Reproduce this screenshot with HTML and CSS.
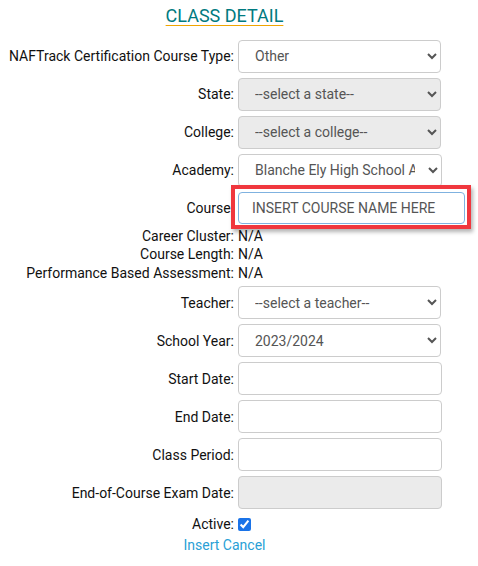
FILE: index.html
```html
<!DOCTYPE html>
<html>
<head>
<meta charset="utf-8">
<link rel="stylesheet" href="styles.css">
</head>
<body>
<div class="page">
  <h1 class="title"><span>CLASS DETAIL</span></h1>
  <div class="form">
    <div class="row">
      <label class="lbl">NAFTrack Certification Course Type:</label>
      <select class="ctl"><option>Other</option></select>
    </div>
    <div class="row">
      <label class="lbl">State:</label>
      <select class="ctl disabled"><option>--select a state--</option></select>
    </div>
    <div class="row">
      <label class="lbl">College:</label>
      <select class="ctl disabled"><option>--select a college--</option></select>
    </div>
    <div class="row">
      <label class="lbl">Academy:</label>
      <select class="ctl"><option>Blanche Ely High School Academy of Finance</option></select>
    </div>
    <div class="row row-course">
      <label class="lbl">Course:</label>
      <div class="course-wrap">
        <input class="ctl course" type="text" value="INSERT COURSE NAME HERE">
        <span class="annot"></span>
      </div>
    </div>
    <div class="info"><span class="lbl">Career Cluster:</span><span class="val">N/A</span></div>
    <div class="info"><span class="lbl">Course Length:</span><span class="val">N/A</span></div>
    <div class="info info-last"><span class="lbl">Performance Based Assessment:</span><span class="val">N/A</span></div>
    <div class="row">
      <label class="lbl">Teacher:</label>
      <select class="ctl"><option>--select a teacher--</option></select>
    </div>
    <div class="row">
      <label class="lbl">School Year:</label>
      <select class="ctl"><option>2023/2024</option></select>
    </div>
    <div class="row">
      <label class="lbl">Start Date:</label>
      <input class="ctl" type="text">
    </div>
    <div class="row">
      <label class="lbl">End Date:</label>
      <input class="ctl" type="text">
    </div>
    <div class="row">
      <label class="lbl">Class Period:</label>
      <input class="ctl" type="text">
    </div>
    <div class="row">
      <label class="lbl">End-of-Course Exam Date:</label>
      <input class="ctl disabled" type="text" readonly>
    </div>
    <div class="active-row">
      <label class="lbl">Active:</label>
      <input class="check" type="checkbox" checked>
    </div>
    <div class="actions"><a href="#">Insert</a> <a href="#">Cancel</a></div>
  </div>
</div>
</body>
</html>
```

FILE: styles.css
```css
html, body {
  margin: 0;
  padding: 0;
  background: #fff;
}
body {
  font-family: Roboto, "Noto Sans", sans-serif;
  font-size: 14px;
  color: #111;
}
.page {
  width: 433px;
  padding: 0 0 0 8px;
}
.title {
  margin: 0;
  padding-top: 5px;
  height: 39.5px;
  box-sizing: border-box;
  text-align: center;
  font-size: 18px;
  font-weight: 400;
  line-height: 21px;
}
.title span {
  color: #007a80;
  text-decoration: underline;
  text-decoration-color: #f0a500;
  text-underline-offset: 3px;
}
.form {
  display: flex;
  flex-direction: column;
}
.row {
  display: flex;
  align-items: center;
  height: 33px;
  margin-bottom: 5px;
}
.row-course {
  margin-bottom: 2px;
  position: relative;
}
.lbl {
  flex: none;
  text-align: right;
  padding-right: 4px;
  box-sizing: border-box;
  width: 230px;
  color: #111;
}
.ctl {
  width: 204px;
  height: 33px;
  box-sizing: border-box;
  border: 1px solid #ccc;
  border-radius: 4px;
  background: #fff;
  font-family: Roboto, "Noto Sans", sans-serif;
  font-size: 14px;
  color: #555;
  padding: 0 12px;
  margin: 0;
}
select.ctl {
  padding: 0 10px 0 12px;
}
.ctl.disabled {
  background: #ebebeb;
}
.course-wrap {
  position: relative;
  display: flex;
  align-items: center;
}
.course {
  width: 227px;
  height: 32px;
  border-color: #7fb2e0;
  padding: 0 13px;
}
.annot {
  position: absolute;
  left: -7px;
  top: -7px;
  right: -6px;
  bottom: -5px;
  border: 4px solid #f0373e;
  box-shadow: 2px 3px 4px rgba(0,0,0,0.3);
  pointer-events: none;
}
.info {
  display: flex;
  height: 18.5px;
  line-height: 18.5px;
}
.info-last {
  margin-bottom: 4px;
}
.val {
  color: #111;
}
.active-row {
  display: flex;
  align-items: center;
  height: 18px;
  margin-top: 1px;
}
.check {
  margin: 0;
  width: 13px;
  height: 13px;
  accent-color: #1a73e8;
}
.actions {
  text-align: center;
  line-height: 18px;
  margin-top: 3px;
}
.actions a {
  color: #2a9fd6;
  text-decoration: none;
}
```
